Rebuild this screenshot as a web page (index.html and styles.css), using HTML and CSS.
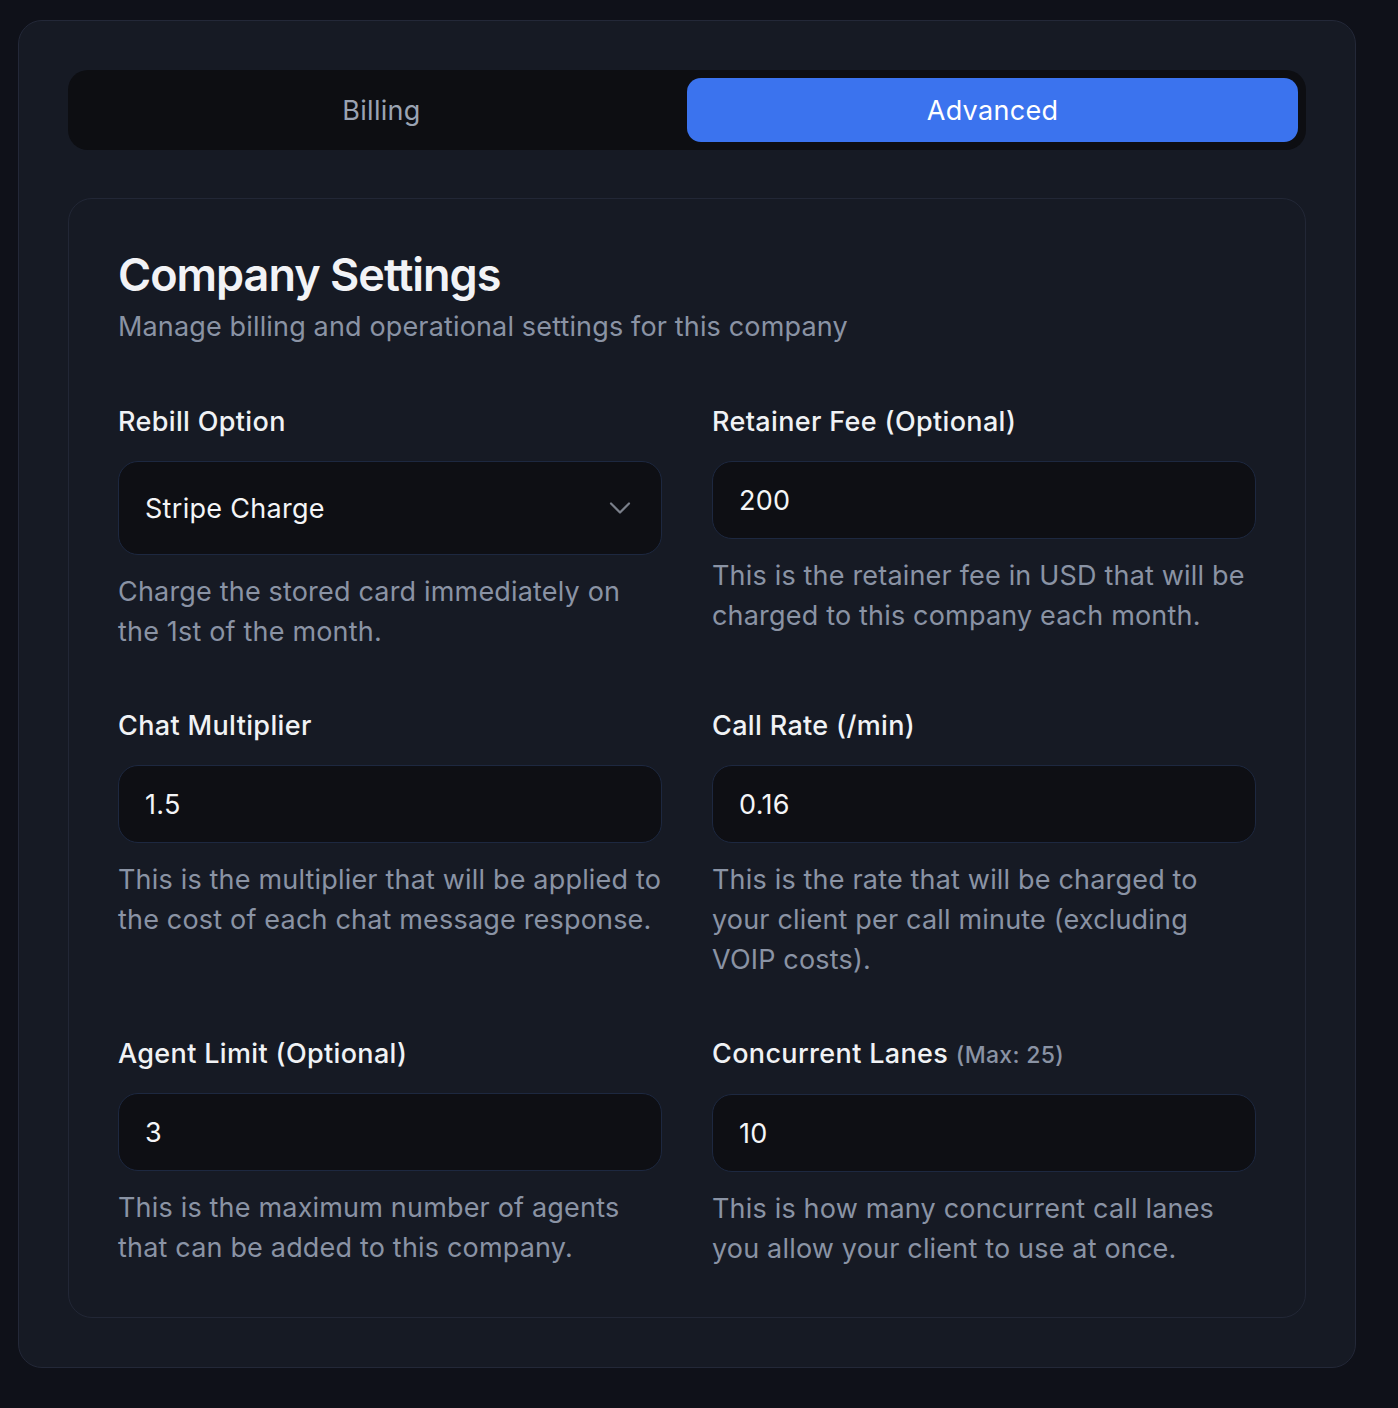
FILE: index.html
```html
<!DOCTYPE html>
<html>
<head>
<meta charset="utf-8">
<link rel="stylesheet" href="styles.css">
</head>
<body>
<div class="outer">
  <div class="tabs">
    <div class="tab">Billing</div>
    <div class="tab active">Advanced</div>
  </div>
  <div class="card">
    <h1 class="title">Company Settings</h1>
    <p class="subtitle">Manage billing and operational settings for this company</p>
    <div class="grid">
      <div class="field">
        <div class="label">Rebill Option</div>
        <div class="select">
          <span>Stripe Charge</span>
          <svg class="chev" width="22" height="12" viewBox="0 0 22 12" fill="none" stroke="#7a7f8a" stroke-width="2.2" stroke-linecap="round" stroke-linejoin="round"><path d="M2 1.5l9 9 9-9"/></svg>
        </div>
        <p class="desc">Charge the stored card immediately on the 1st of the month.</p>
      </div>
      <div class="field">
        <div class="label">Retainer Fee (Optional)</div>
        <div class="input">200</div>
        <p class="desc">This is the retainer fee in USD that will be charged to this company each month.</p>
      </div>
      <div class="field">
        <div class="label">Chat Multiplier</div>
        <div class="input">1.5</div>
        <p class="desc">This is the multiplier that will be applied to the cost of each chat message response.</p>
      </div>
      <div class="field">
        <div class="label">Call Rate (/min)</div>
        <div class="input">0.16</div>
        <p class="desc">This is the rate that will be charged to your client per call minute (excluding VOIP costs).</p>
      </div>
      <div class="field">
        <div class="label">Agent Limit (Optional)</div>
        <div class="input">3</div>
        <p class="desc">This is the maximum number of agents that can be added to this company.</p>
      </div>
      <div class="field">
        <div class="label">Concurrent Lanes <span class="muted">(Max: 25)</span></div>
        <div class="input">10</div>
        <p class="desc">This is how many concurrent call lanes you allow your client to use at once.</p>
      </div>
    </div>
  </div>
</div>
</body>
</html>
```
FILE: styles.css
```css
* { box-sizing: border-box; }
html, body { margin: 0; padding: 0; }
body {
  background: #0f1119;
  font-family: Inter, "Noto Sans", sans-serif;
  padding: 20px 42px 40px 18px;
  min-height: 1408px;
}
.outer {
  background: #161a24;
  border: 1px solid #232838;
  border-radius: 24px;
  padding: 49px;
}
.tabs {
  background: #0d0e12;
  border-radius: 20px;
  padding: 8px;
  display: grid;
  grid-template-columns: 1fr 1fr;
  height: 80px;
}
.tab {
  display: flex;
  align-items: center;
  justify-content: center;
  font-size: 27px;
  letter-spacing: 0.3px;
  color: #9aa3b2;
  border-radius: 14px;
}
.tab.active {
  background: #3b73ee;
  color: #ffffff;
}
.card {
  margin-top: 48px;
  border: 1px solid #222736;
  border-radius: 24px;
  padding: 49px 49px 48px 49px;
}
.title {
  margin: 0;
  font-size: 45px;
  font-weight: 600;
  letter-spacing: -1px;
  line-height: 54px;
  color: #f2f3f6;
}
.subtitle {
  margin: 0;
  font-size: 27px;
  letter-spacing: 0.15px;
  line-height: 50px;
  color: #8a93a4;
}
.grid {
  margin-top: 50px;
  display: grid;
  grid-template-columns: 1fr 1fr;
  column-gap: 50px;
  row-gap: 54px;
}
.label {
  font-size: 27px;
  line-height: 40px;
  font-weight: 500;
  letter-spacing: 0.35px;
  color: #f0f2f5;
  margin-bottom: 19px;
}
.muted {
  font-size: 23px;
  color: #8a93a4;
  font-weight: 500;
  letter-spacing: 0.3px;
}
.select, .input {
  background: #0e0f14;
  border: 1px solid #1d2840;
  border-radius: 20px;
  padding: 0 26px;
  display: flex;
  align-items: center;
  font-size: 27px;
  letter-spacing: 0.3px;
  color: #f4f5f7;
}
.select {
  height: 94px;
  justify-content: space-between;
  padding-right: 30px;
}
.input { height: 78px; }
.desc {
  margin: 17px 0 0;
  font-size: 27px;
  line-height: 40px;
  letter-spacing: 0.18px;
  color: #8a93a4;
}
```
